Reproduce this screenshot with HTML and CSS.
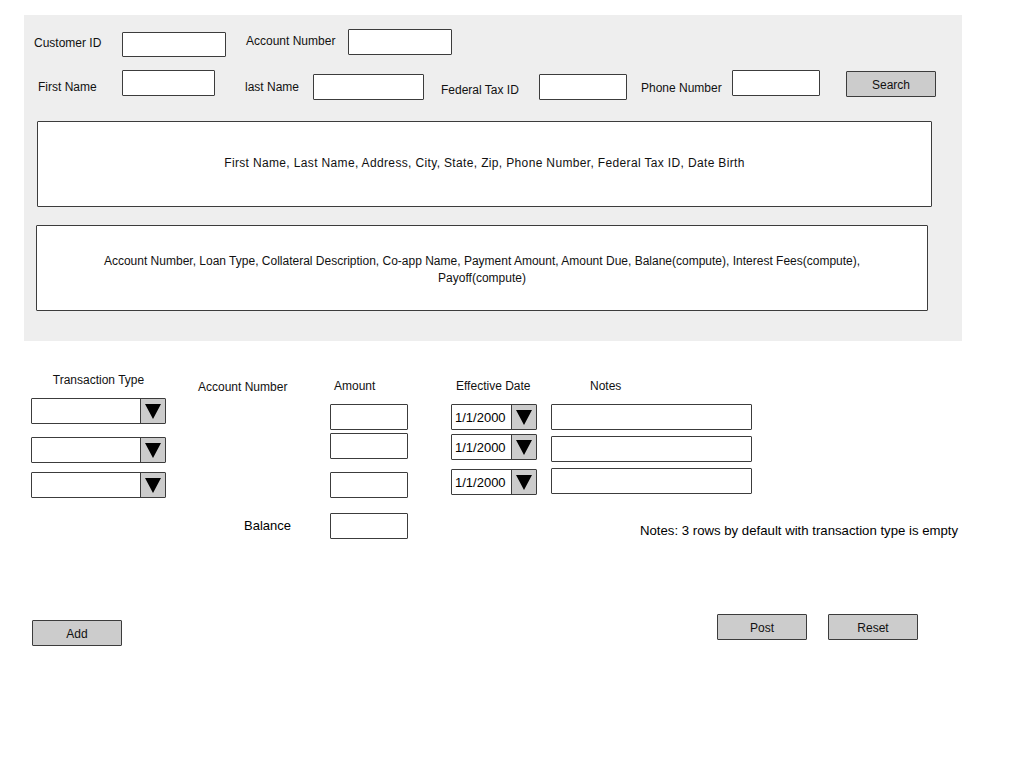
FILE: index.html
```html
<!DOCTYPE html>
<html>
<head>
<meta charset="utf-8">
<title>Loan Transactions</title>
<link rel="stylesheet" href="styles.css">
</head>
<body>
<div class="page">
  <section class="panel">
    <div class="row row1">
      <span class="lbl l-cust">Customer ID</span>
      <span class="inp i-cust"></span>
      <span class="lbl l-acct">Account Number</span>
      <span class="inp i-acct"></span>
    </div>
    <div class="row row2">
      <span class="lbl l-first">First Name</span>
      <span class="inp i-first"></span>
      <span class="lbl l-last">last Name</span>
      <span class="inp i-last"></span>
      <span class="lbl l-tax">Federal Tax ID</span>
      <span class="inp i-tax"></span>
      <span class="lbl l-phone">Phone Number</span>
      <span class="inp i-phone"></span>
      <span class="btn b-search">Search</span>
    </div>
    <div class="box box1">First Name, Last Name, Address, City, State, Zip, Phone Number, Federal Tax ID, Date Birth</div>
    <div class="box box2">Account Number, Loan Type, Collateral Description, Co-app Name, Payment Amount, Amount Due, Balane(compute), Interest Fees(compute),<br>Payoff(compute)</div>
  </section>

  <section class="tx">
    <div class="col c-type">
      <span class="hdr">Transaction Type</span>
      <span class="combo cb1"><span class="cb-field"></span><span class="cb-btn"><svg viewBox="0 0 16 16" width="16" height="16"><polygon points="0,1 16,1 8,16" fill="#000"/></svg></span></span>
      <span class="combo cb2"><span class="cb-field"></span><span class="cb-btn"><svg viewBox="0 0 16 16" width="16" height="16"><polygon points="0,1 16,1 8,16" fill="#000"/></svg></span></span>
      <span class="combo cb3"><span class="cb-field"></span><span class="cb-btn"><svg viewBox="0 0 16 16" width="16" height="16"><polygon points="0,1 16,1 8,16" fill="#000"/></svg></span></span>
    </div>
    <div class="col c-acct">
      <span class="hdr">Account Number</span>
      <span class="sans balance">Balance</span>
    </div>
    <div class="col c-amt">
      <span class="hdr">Amount</span>
      <span class="inp a1"></span>
      <span class="inp a2"></span>
      <span class="inp a3"></span>
      <span class="inp a4"></span>
    </div>
    <div class="col c-date">
      <span class="hdr">Effective Date</span>
      <span class="combo date d1"><span class="cb-field sans">1/1/2000</span><span class="cb-btn"><svg viewBox="0 0 16 16" width="16" height="16"><polygon points="0,1 16,1 8,16" fill="#000"/></svg></span></span>
      <span class="combo date d2"><span class="cb-field sans">1/1/2000</span><span class="cb-btn"><svg viewBox="0 0 16 16" width="16" height="16"><polygon points="0,1 16,1 8,16" fill="#000"/></svg></span></span>
      <span class="combo date d3"><span class="cb-field sans">1/1/2000</span><span class="cb-btn"><svg viewBox="0 0 16 16" width="16" height="16"><polygon points="0,1 16,1 8,16" fill="#000"/></svg></span></span>
    </div>
    <div class="col c-notes">
      <span class="hdr">Notes</span>
      <span class="inp n1"></span>
      <span class="inp n2"></span>
      <span class="inp n3"></span>
      <span class="sans note-text">Notes: 3 rows by default with transaction type is empty</span>
    </div>
  </section>

  <section class="actions">
    <span class="btn b-add">Add</span>
    <span class="btn b-post">Post</span>
    <span class="btn b-reset">Reset</span>
  </section>
</div>
</body>
</html>
```

FILE: styles.css
```css
* { box-sizing: border-box; }
html, body { margin: 0; padding: 0; background: #fff; }
body {
  font-family: "Liberation Sans", Arial, sans-serif;
  font-size: 12px;
  color: #111;
  width: 1024px;
  height: 768px;
  overflow: hidden;
}
.page { padding-top: 15px; }

.sans { font-family: "Liberation Sans", Arial, sans-serif; font-size: 13px; color: #000; }

.inp {
  display: block;
  background: #fff;
  border: 1.5px solid #3c3c3c;
  border-radius: 1px;
  flex: none;
}
.lbl { display: block; line-height: 25px; height: 25px; flex: none; white-space: nowrap; }

.btn {
  display: flex;
  align-items: center;
  justify-content: center;
  width: 90px;
  height: 26px;
  background: #cccccc;
  border: 1.5px solid #3c3c3c;
  border-radius: 1px;
  flex: none;
  padding-top: 1px;
}

/* top panel */
.panel {
  margin-left: 24px;
  width: 938px;
  height: 326px;
  background: #eeeeee;
  padding-top: 14px;
}
.row { display: flex; align-items: flex-start; }
.row1 { height: 41px; }
.l-cust { margin-left: 10px; width: 88px; margin-top: 2px; }
.i-cust { width: 104px; height: 25px; margin-top: 3px; }
.l-acct { margin-left: 20px; width: 102px; margin-top: 0; }
.i-acct { width: 104px; height: 26px; }

.row2 { height: 30px; }
.l-first { margin-left: 14px; width: 84px; margin-top: 5px; }
.i-first { width: 93px; height: 26px; }
.l-last { margin-left: 30px; width: 68px; margin-top: 5px; }
.i-last { width: 111px; height: 26px; margin-top: 4px; }
.l-tax { margin-left: 17px; width: 98px; margin-top: 8px; }
.i-tax { width: 88px; height: 26px; margin-top: 4px; }
.l-phone { margin-left: 14px; width: 91px; margin-top: 6px; }
.i-phone { width: 88px; height: 26px; }
.b-search { margin-left: 26px; margin-top: 1px; }

.box {
  display: flex;
  align-items: center;
  justify-content: center;
  text-align: center;
  background: #fff;
  border: 1.5px solid #3c3c3c;
  border-radius: 1px;
  height: 86px;
  line-height: 17px;
}
.box1 { margin: 21px 0 0 13px; width: 895px; padding-bottom: 2px; letter-spacing: 0.35px; }
.box2 { margin: 18px 0 0 12px; width: 892px; padding-top: 4px; }

/* transactions */
.tx { display: flex; align-items: flex-start; }
.col { display: flex; flex-direction: column; align-items: flex-start; flex: none; }
.hdr { display: block; line-height: 16px; height: 16px; white-space: nowrap; }

.combo {
  display: flex;
  height: 26px;
  background: #fff;
  border: 1.5px solid #3c3c3c;
  border-radius: 1px;
}
.cb-field { flex: 1; display: flex; align-items: center; padding-left: 3px; }
.cb-btn {
  width: 25px;
  flex: none;
  background: #cccccc;
  border-left: 1.5px solid #3c3c3c;
  display: flex;
  align-items: center;
  justify-content: center;
}
.cb-btn svg { display: block; }

.c-type { margin-left: 31px; width: 135px; margin-top: 31px; }
.c-type .hdr { align-self: center; }
.c-type .combo { width: 135px; }
.cb1 { margin-top: 10px; }
.cb2 { margin-top: 13px; }
.cb3 { margin-top: 9px; }

.c-acct { margin-left: 32px; width: 132px; margin-top: 38px; }
.balance { margin-left: 46px; margin-top: 123px; line-height: 16px; }

.c-amt { width: 77px; margin-top: 37px; }
.c-amt .hdr { margin-left: 4px; }
.c-amt .inp { width: 78px; height: 26px; }
.a1 { margin-top: 10px; }
.a2 { margin-top: 3px; }
.a3 { margin-top: 13px; }
.a4 { margin-top: 15px; }

.c-date { margin-left: 44px; width: 85px; margin-top: 37px; }
.c-date .hdr { margin-left: 5px; }
.date { width: 86px; }
.d1 { margin-top: 10px; }
.d2 { margin-top: 4px; }
.d3 { margin-top: 9px; }

.c-notes { margin-left: 15px; width: 200px; margin-top: 37px; }
.c-notes .hdr { margin-left: 39px; }
.c-notes .inp { width: 201px; height: 26px; }
.n1 { margin-top: 10px; }
.n2 { margin-top: 6px; }
.n3 { margin-top: 6px; }
.note-text { margin-left: 89px; margin-top: 29px; line-height: 16px; white-space: nowrap; font-size: 13.2px; }

/* actions */
.actions { display: flex; align-items: flex-start; margin-top: 75px; }
.b-add { margin-left: 32px; margin-top: 6px; }
.b-post { margin-left: 595px; }
.b-reset { margin-left: 21px; }
```
